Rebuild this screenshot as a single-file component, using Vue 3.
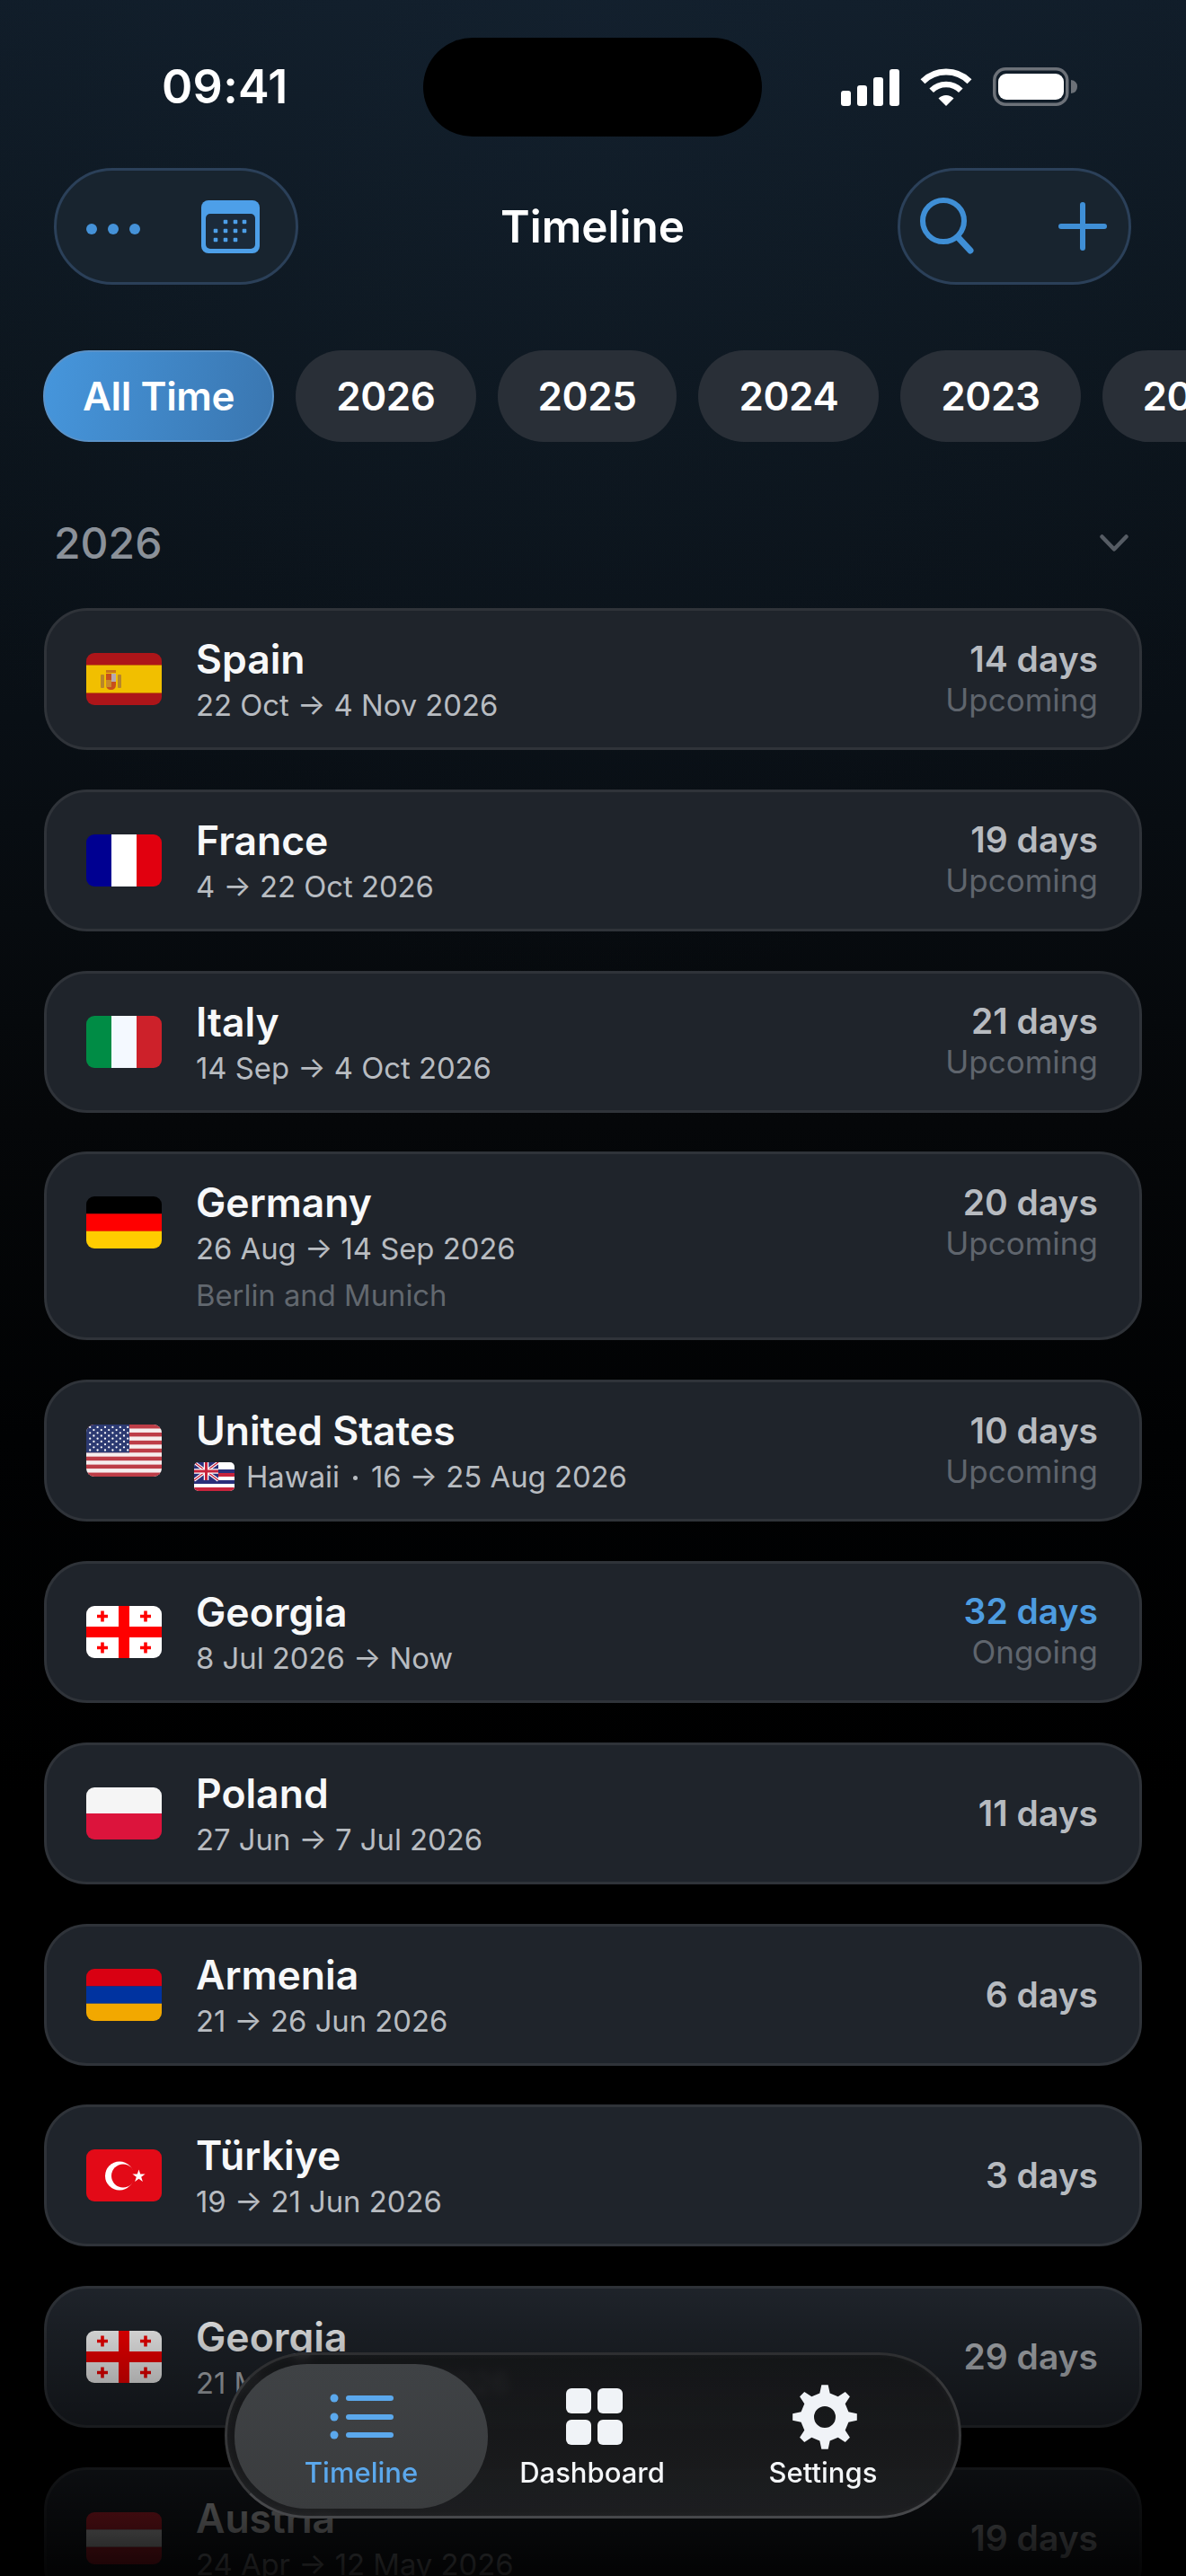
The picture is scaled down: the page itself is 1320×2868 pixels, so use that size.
<script setup>
const stripes = (cols, w = 84, h = 58) =>
  cols.map((c, i) => `<rect x="0" y="${(i * h) / cols.length}" width="${w}" height="${h / cols.length + 0.2}" fill="${c}"/>`).join('')
const vstripes = (cols) =>
  cols.map((c, i) => `<rect x="${i * 28}" y="0" width="28.2" height="58" fill="${c}"/>`).join('')

const usStars = () => {
  let s = ''
  for (let r = 0; r < 9; r++) {
    const n = r % 2 ? 5 : 6
    for (let c = 0; c < n; c++) {
      const x = (r % 2 ? 8.4 : 4.2) + c * 8.4
      s += `<circle cx="${x}" cy="${2.9 + r * 3.2}" r="1.15" fill="#fff"/>`
    }
  }
  return s
}
const usStripes = () => {
  let s = '<rect width="84" height="58" fill="#f6eeee"/>'
  for (let i = 0; i < 7; i++) s += `<rect y="${(i * 2 * 58) / 13}" width="84" height="${58 / 13}" fill="#bd3d47"/>`
  return s
}
const geCross = (x, y) =>
  `<path d="M${x - 1.8} ${y - 6}h3.6v4.2h4.2v3.6h-4.2v4.2h-3.6v-4.2h-4.2v-3.6h4.2z" fill="#f00"/>`

const flags = {
  es:
    '<rect width="84" height="58" fill="#ad1519"/><rect y="13" width="84" height="32" fill="#c96a06"/><rect y="14" width="84" height="30" fill="#f1bf00"/>' +
    '<rect x="16" y="24" width="4" height="15" rx="1" fill="#b8862a"/><rect x="35" y="24" width="4" height="15" rx="1" fill="#b8862a"/>' +
    '<path d="M22 19h11v3H22z" fill="#c8761c"/><path d="M22 23h11v12q0 6-5.500 6T22 35z" fill="#c8501c"/><path d="M28 23h5v9h-5z" fill="#b8a8b0"/><path d="M22 30h6v8h-6z" fill="#c98a2a"/>',
  fr: vstripes(['#000091', '#ffffff', '#e1000f']),
  it: vstripes(['#008c45', '#f4f9ff', '#cd212a']),
  de: stripes(['#000000', '#ff0000', '#ffcc00']),
  us: usStripes() + `<rect width="48" height="31.300" fill="#2c3a72"/>` + usStars(),
  ge:
    '<rect width="84" height="58" fill="#fff"/><rect x="36" width="12" height="58" fill="#f00"/><rect y="23" width="84" height="12" fill="#f00"/>' +
    geCross(18, 11.500) + geCross(66, 11.500) + geCross(18, 46.500) + geCross(66, 46.500),
  pl: stripes(['#f5f5f5', '#dc143c']),
  am: stripes(['#d90012', '#0033a0', '#f2a800']),
  tr:
    '<rect width="84" height="58" fill="#e30a17"/><circle cx="37" cy="29.500" r="16" fill="#fff"/><circle cx="41" cy="29.500" r="13" fill="#e30a17"/>' +
    '<path d="M58.500 22.500l1.700 5.100 5.400 0-4.400 3.200 1.700 5.100-4.400-3.200-4.400 3.200 1.700-5.100-4.400-3.200 5.400 0z" fill="#fff"/>',
  at: stripes(['#ed2939', '#ffffff', '#ed2939']),
}
const hawaii =
  '<rect width="45" height="32" fill="#fff"/>' +
  '<rect y="8" width="45" height="4" fill="#2a2f7a"/><rect y="12" width="45" height="4" fill="#c8243c"/><rect y="20" width="45" height="4" fill="#2a2f7a"/><rect y="24" width="45" height="4" fill="#fff"/><rect y="28" width="45" height="4" fill="#c8243c"/><rect y="16" width="45" height="4" fill="#fff"/>' +
  '<rect width="27" height="20" fill="#2a2f7a"/><path d="M0 0L27 20M27 0L0 20" stroke="#fff" stroke-width="3.500"/><path d="M0 0L27 20M27 0L0 20" stroke="#c8243c" stroke-width="1.400"/><path d="M13.500 0v20M0 10h27" stroke="#fff" stroke-width="5.500"/><path d="M13.500 0v20M0 10h27" stroke="#c8243c" stroke-width="3"/>'

const chips = ['All Time', '2026', '2025', '2024', '2023', '2022']

const trips = [
  { flag: 'es', name: 'Spain', dates: '22 Oct → 4 Nov 2026', days: '14 days', status: 'Upcoming' },
  { flag: 'fr', name: 'France', dates: '4 → 22 Oct 2026', days: '19 days', status: 'Upcoming' },
  { flag: 'it', name: 'Italy', dates: '14 Sep → 4 Oct 2026', days: '21 days', status: 'Upcoming' },
  { flag: 'de', name: 'Germany', dates: '26 Aug → 14 Sep 2026', note: 'Berlin and Munich', days: '20 days', status: 'Upcoming' },
  { flag: 'us', name: 'United States', place: 'Hawaii', dates: '16 → 25 Aug 2026', days: '10 days', status: 'Upcoming' },
  { flag: 'ge', name: 'Georgia', dates: '8 Jul 2026 → Now', days: '32 days', status: 'Ongoing', live: true },
  { flag: 'pl', name: 'Poland', dates: '27 Jun → 7 Jul 2026', days: '11 days' },
  { flag: 'am', name: 'Armenia', dates: '21 → 26 Jun 2026', days: '6 days' },
  { flag: 'tr', name: 'Türkiye', dates: '19 → 21 Jun 2026', days: '3 days' },
  { flag: 'ge', name: 'Georgia', dates: '21 May → 18 Jun 2026', days: '29 days' },
  { flag: 'at', name: 'Austria', dates: '24 Apr → 12 May 2026', days: '19 days' },
]

const calDots = [
  [27, 24], [38, 24], [48, 24],
  [16, 34], [27, 34], [38, 34], [48, 34],
  [16, 44], [27, 44], [38, 44],
]

const gearPath = (() => {
  const teeth = 8
  const R = 36
  const r = 27
  const pts = []
  for (let i = 0; i < teeth; i++) {
    const a = (i * 2 * Math.PI) / teeth - Math.PI / 2
    const step = (2 * Math.PI) / teeth
    const list = [
      [r, a - step * 0.27],
      [R, a - step * 0.13],
      [R, a + step * 0.13],
      [r, a + step * 0.27],
    ]
    list.forEach(([rad, an]) => pts.push(`${(36 + rad * Math.cos(an)).toFixed(2)} ${(36 + rad * Math.sin(an)).toFixed(2)}`))
  }
  return `M${pts.join('L')}Z M36 24a12 12 0 1 0 0 24a12 12 0 1 0 0-24Z`
})()
</script>

<template>
  <div class="page">
    <div class="island"></div>

    <header class="status">
      <span class="time">09:41</span>
      <div class="status-icons">
        <svg width="65" height="41" viewBox="0 0 65 41" fill="#fff">
          <rect x="0" y="24" width="11" height="17" rx="3" />
          <rect x="18" y="18" width="11" height="23" rx="3" />
          <rect x="36" y="9" width="11" height="32" rx="3" />
          <rect x="54" y="0" width="11" height="41" rx="3" />
        </svg>
        <svg width="58" height="42" viewBox="0 0 58 42" fill="none" stroke="#fff">
          <path d="M3 14.800A37 37 0 0 1 55 14.800" stroke-width="7" />
          <path d="M12.700 24.700A23 23 0 0 1 45.300 24.700" stroke-width="6.500" />
          <path d="M29 42L20.500 33.500A12 12 0 0 1 37.500 33.500Z" fill="#fff" stroke="none" />
        </svg>
        <svg width="94" height="43" viewBox="0 0 94 43" fill="none">
          <rect x="1.750" y="1.750" width="81" height="39.500" rx="12.500" stroke="#6c7178" stroke-width="3.500" />
          <rect x="6" y="7" width="73" height="29" rx="9" fill="#fff" />
          <path d="M87 14q7 1 7 7.500t-7 7.500z" fill="#6c7178" />
        </svg>
      </div>
    </header>

    <div class="topbar">
      <div class="glass glass-left">
        <div class="dots"><i></i><i></i><i></i></div>
        <svg width="65" height="59" viewBox="0 0 65 59">
          <rect width="65" height="59" rx="8" fill="#4d9fe8" />
          <rect x="5" y="15" width="55" height="39" rx="5" fill="#1b2a3a" />
          <rect
            v-for="(d, i) in calDots"
            :key="i"
            :x="d[0] - 2.3"
            :y="d[1] - 2.3"
            width="4.600"
            height="4.600"
            rx="1"
            fill="#4d9fe8"
          />
        </svg>
      </div>
      <h1 class="title">Timeline</h1>
      <div class="glass glass-right">
        <svg width="64" height="64" viewBox="0 0 64 64" fill="none" stroke="#3f8fd6" stroke-linecap="round">
          <circle cx="26" cy="26" r="23" stroke-width="6" />
          <path d="M43 45L56 59" stroke-width="7" />
        </svg>
        <svg width="54" height="54" viewBox="0 0 54 54" fill="none" stroke="#3f8fd6" stroke-width="6" stroke-linecap="round">
          <path d="M27 3v48M3 27h48" />
        </svg>
      </div>
    </div>

    <div class="chips">
      <span v-for="(c, i) in chips" :key="c" class="chip" :class="{ active: i === 0 }">{{ c }}</span>
    </div>

    <div class="section">
      <span class="section-year">2026</span>
      <svg width="32" height="19" viewBox="0 0 32 19" fill="none" stroke="#565c64" stroke-width="4.500" stroke-linecap="round" stroke-linejoin="round">
        <path d="M2.500 2.500L16 16.500L29.500 2.500" />
      </svg>
    </div>

    <div class="list">
      <article v-for="(t, i) in trips" :key="i" class="card">
        <svg class="flag" viewBox="0 0 84 58" v-html="flags[t.flag]"></svg>
        <div class="info">
          <div class="name">{{ t.name }}</div>
          <div class="dates">
            <svg v-if="t.place" class="subflag" viewBox="0 0 45 32" v-html="hawaii"></svg>
            <span v-if="t.place">{{ t.place }}</span>
            <span v-if="t.place" class="sep"></span>
            <span>{{ t.dates }}</span>
          </div>
          <div v-if="t.note" class="note">{{ t.note }}</div>
        </div>
        <div class="side">
          <div class="days" :class="{ live: t.live }">{{ t.days }}</div>
          <div v-if="t.status" class="state">{{ t.status }}</div>
        </div>
      </article>
    </div>

    <div class="fade"></div>

    <nav class="tabbar">
      <div class="tab tab-active">
        <svg class="ic-list" width="72" height="56" viewBox="0 0 72 56" fill="#5ba8ec">
          <circle cx="5" cy="7" r="4.500" /><rect x="18" y="4" width="53" height="6" rx="3" />
          <circle cx="5" cy="28" r="4.500" /><rect x="18" y="25" width="53" height="6" rx="3" />
          <circle cx="5" cy="48" r="4.500" /><rect x="18" y="45" width="53" height="6" rx="3" />
        </svg>
        <span>Timeline</span>
      </div>
      <div class="tab">
        <svg class="ic-grid" width="63" height="63" viewBox="0 0 63 63" fill="#f0f3f7">
          <rect width="28" height="28" rx="6" /><rect x="35" width="28" height="28" rx="6" />
          <rect y="35" width="28" height="28" rx="6" /><rect x="35" y="35" width="28" height="28" rx="6" />
        </svg>
        <span>Dashboard</span>
      </div>
      <div class="tab">
        <svg class="ic-gear" width="72" height="72" viewBox="0 0 72 72">
          <path :d="gearPath" fill="#f0f3f7" fill-rule="evenodd" />
        </svg>
        <span>Settings</span>
      </div>
    </nav>
  </div>
</template>

<style>
html, body { margin: 0; background: #000; }
</style>

<style scoped>
.page {
  position: relative;
  width: 1320px;
  height: 2868px;
  overflow: hidden;
  font-family: Inter, "Liberation Sans", sans-serif;
  color: #fff;
  background:
    radial-gradient(ellipse 900px 1100px at 660px 0, rgba(24, 40, 56, 0.35), rgba(24, 40, 56, 0) 100%),
    linear-gradient(180deg, #101c28 0, #0c151d 400px, #090f15 800px, #050709 1250px, #010203 1600px, #000 2000px);
}

.island {
  position: absolute;
  left: 471px;
  top: 42px;
  width: 377px;
  height: 110px;
  border-radius: 55px;
  background: #000;
}

.status {
  height: 187px;
  box-sizing: border-box;
  padding: 75px 121px 0 180px;
  display: flex;
  justify-content: space-between;
  align-items: flex-start;
}
.time {
  font-size: 52px;
  font-weight: 600;
  line-height: 44px;
  letter-spacing: 0.3px;
}
.status-icons {
  display: flex;
  align-items: flex-end;
  gap: 23px;
  height: 43px;
}

.topbar {
  display: grid;
  grid-template-columns: 1fr auto 1fr;
  align-items: center;
  padding: 0 61px 0 60px;
}
.glass {
  height: 130px;
  box-sizing: border-box;
  border-radius: 65px;
  background: #18242f;
  border: 3px solid #2b4059;
  display: flex;
  align-items: center;
}
.glass-left {
  width: 272px;
  justify-self: start;
  padding: 0 40px 0 33px;
  justify-content: space-between;
}
.glass-right {
  width: 260px;
  justify-self: end;
  padding: 0 24px 0 22px;
  justify-content: space-between;
}
.dots { display: flex; gap: 12px; margin-top: 6px; }
.dots i { width: 12px; height: 12px; border-radius: 50%; background: #4592d8; }
.title {
  margin: 0;
  font-size: 49.5px;
  font-weight: 600;
  line-height: 60px;
  color: #fff;
}

.chips {
  margin-top: 73px;
  padding-left: 48px;
  display: flex;
  gap: 24px;
  white-space: nowrap;
}
.chip {
  flex: none;
  height: 102px;
  box-sizing: border-box;
  padding: 0 45px;
  border-radius: 51px;
  background: #292f37;
  font-size: 44px;
  font-weight: 600;
  letter-spacing: -0.4px;
  line-height: 102px;
  color: #fff;
}
.chip.active {
  padding: 0 42px;
  background: linear-gradient(100deg, #4696dc, #3a76b0);
  border: 2px solid #5a92c8;
  line-height: 98px;
}

.section {
  height: 185px;
  box-sizing: border-box;
  padding: 72px 64px 32px 60px;
  display: flex;
  justify-content: space-between;
  align-items: center;
}
.section-year {
  font-size: 48px;
  font-weight: 500;
  color: #8b9199;
}

.list {
  display: flex;
  flex-direction: column;
  gap: 43.8px;
  padding: 0 49px;
}
.card {
  flex: none;
  display: flex;
  align-items: flex-start;
  box-sizing: border-box;
  min-height: 158px;
  padding: 26px 46px 24px 44px;
  border: 3px solid #2f3339;
  border-radius: 48px;
  background: #1f242b;
}
.flag {
  flex: none;
  width: 84px;
  height: 58px;
  margin-top: 21px;
  border-radius: 9px;
  overflow: hidden;
}
.info {
  flex: 1;
  min-width: 0;
  margin-left: 38px;
}
.name {
  font-size: 44.5px;
  font-weight: 600;
  line-height: 56px;
  color: #f7f8f9;
}
.dates {
  display: flex;
  align-items: center;
  font-size: 32.8px;
  line-height: 46px;
  color: #b8bcc1;
}
.subflag {
  flex: none;
  width: 45px;
  height: 32px;
  margin: 0 13px 0 -2px;
  border-radius: 5px;
  overflow: hidden;
}
.sep {
  flex: none;
  width: 5px;
  height: 5px;
  margin: 3px 15px 0;
  border-radius: 50%;
  background: #b8bcc1;
}
.note {
  margin-top: 6px;
  font-size: 32.8px;
  line-height: 46px;
  color: #62686f;
}
.side {
  flex: none;
  min-height: 102px;
  margin-top: -1px;
  display: flex;
  flex-direction: column;
  justify-content: center;
  align-items: flex-end;
}
.days {
  font-size: 39px;
  font-weight: 600;
  line-height: 44px;
  color: #b7bbc0;
}
.days.live { color: #4d9ce0; }
.state {
  margin-top: 1px;
  font-size: 35px;
  line-height: 44px;
  color: #5f656d;
}

.fade {
  position: absolute;
  left: 0;
  right: 0;
  bottom: 0;
  height: 328px;
  pointer-events: none;
  background: linear-gradient(180deg, rgba(0, 0, 0, 0) 0, rgba(0, 0, 0, 0.2) 60px, rgba(0, 0, 0, 0.75) 260px, rgba(0, 0, 0, 0.9) 328px);
}

.tabbar {
  position: absolute;
  left: 250px;
  top: 2619px;
  width: 820px;
  height: 185px;
  box-sizing: border-box;
  padding: 10px 0 10px 20.5px;
  border: 3px solid;
  border-color: #2e2f31 #363739 #46474a;
  border-radius: 92px;
  background: linear-gradient(180deg, rgba(20, 21, 23, 0.88), rgba(31, 32, 34, 0.92));
  backdrop-filter: blur(5px);
  box-shadow: inset 0 0 10px rgba(255, 255, 255, 0.04);
  display: grid;
  grid-template-columns: 257px 257px 257px;
  align-items: center;
}
.tab {
  height: 161px;
  box-sizing: border-box;
  display: flex;
  flex-direction: column;
  align-items: center;
  justify-content: flex-end;
  padding-bottom: 21px;
  font-size: 31px;
  font-weight: 500;
  line-height: 38px;
  color: #f4f6f8;
}
.ic-list { margin-bottom: 15px; margin-left: 2px; }
.ic-grid { margin-bottom: 12px; margin-left: 4px; }
.ic-gear { margin-bottom: 7px; margin-left: 4px; }
.tab-active {
  margin: 0 -12.5px;
  border-radius: 81px / 80px;
  background: linear-gradient(180deg, #3f4245, #3a3c3e);
  color: #5ba8ec;
}
</style>
